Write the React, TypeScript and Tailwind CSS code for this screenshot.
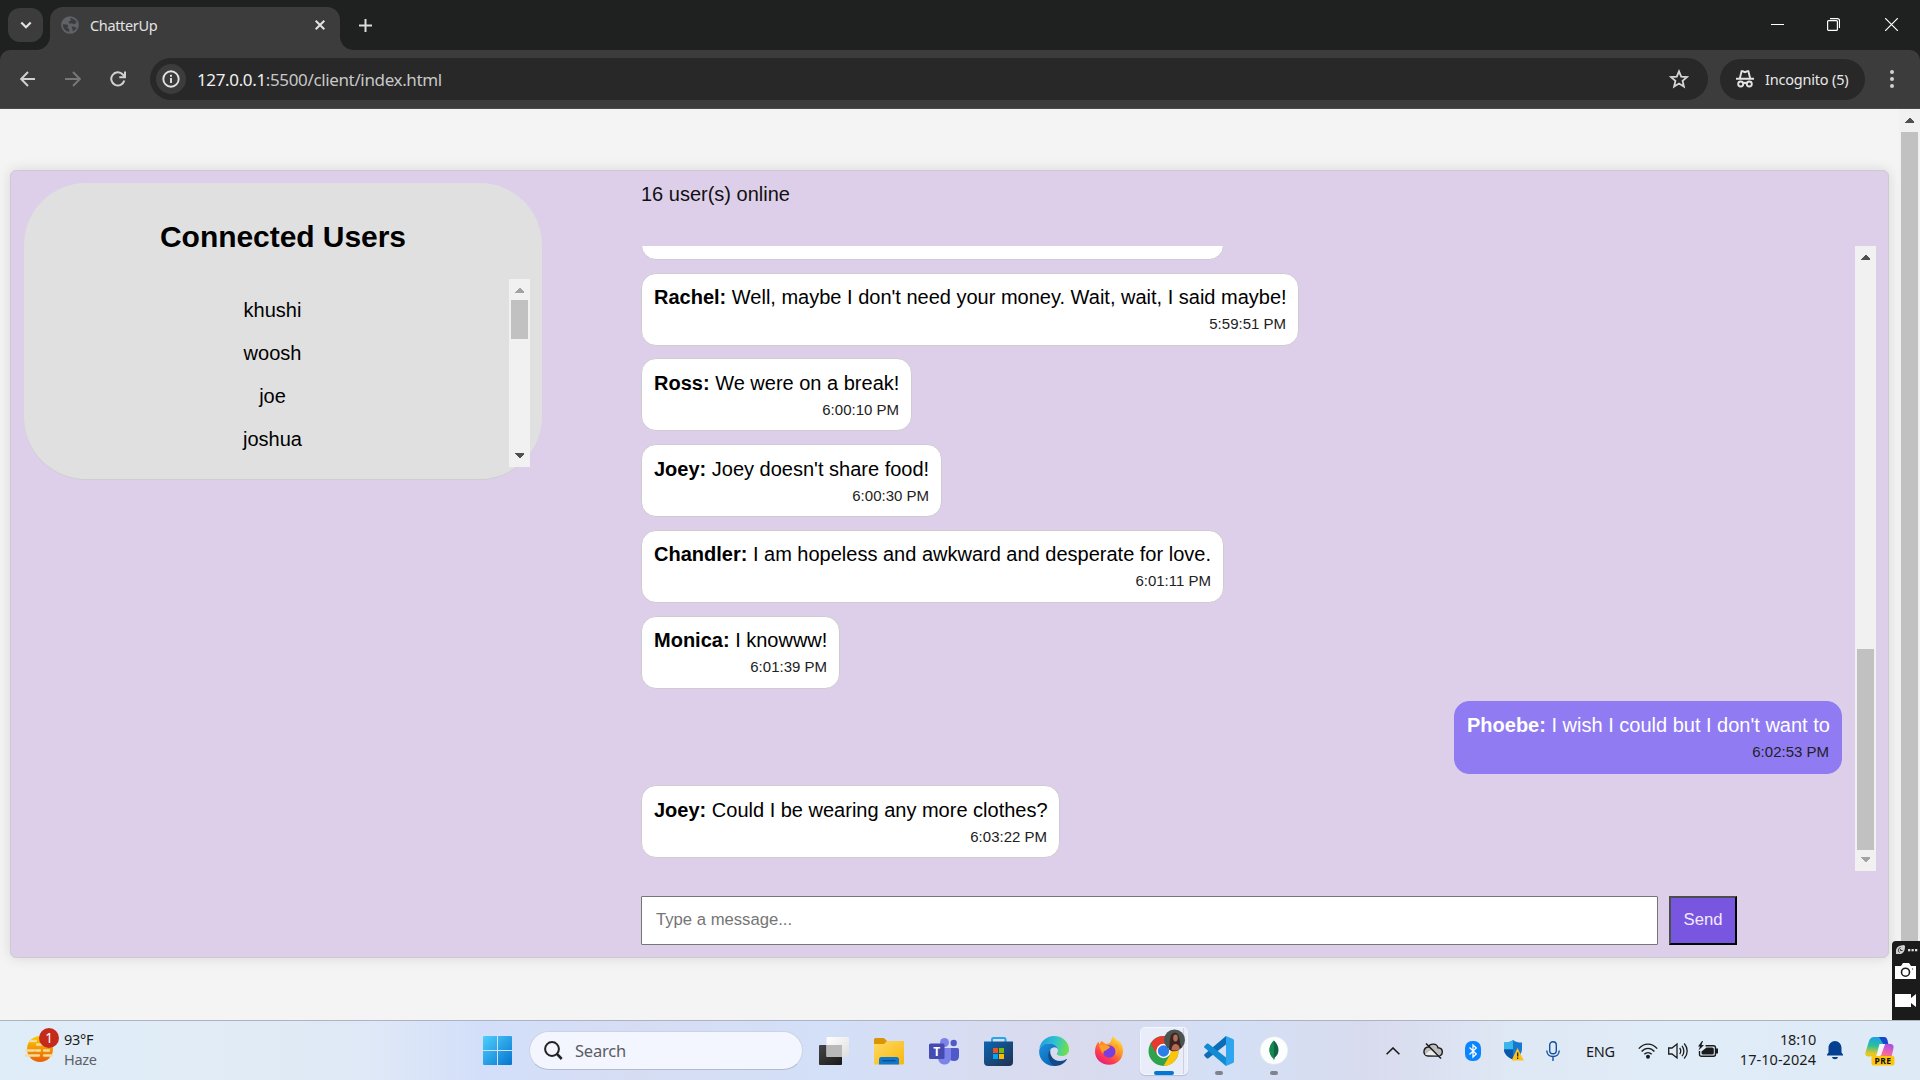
import React from "react";

type Message = {
  name: string;
  text: string;
  time: string;
  width: string;
  gap: string;
  pad: string;
  own?: boolean;
};

const messages: Message[] = [
  { name: "Rachel:", text: "Well, maybe I don't need your money. Wait, wait, I said maybe!", time: "5:59:51 PM", width: "w-[658px]", gap: "mt-[13px]", pad: "pt-[11px]" },
  { name: "Ross:", text: "We were on a break!", time: "6:00:10 PM", width: "w-[271px]", gap: "mt-[12px]", pad: "pt-[12px]" },
  { name: "Joey:", text: "Joey doesn't share food!", time: "6:00:30 PM", width: "w-[301px]", gap: "mt-[13px]", pad: "pt-[12px]" },
  { name: "Chandler:", text: "I am hopeless and awkward and desperate for love.", time: "6:01:11 PM", width: "w-[583px]", gap: "mt-[13px]", pad: "pt-[11px]" },
  { name: "Monica:", text: "I knowww!", time: "6:01:39 PM", width: "w-[199px]", gap: "mt-[13px]", pad: "pt-[11px]" },
  { name: "Phoebe:", text: "I wish I could but I don't want to", time: "6:02:53 PM", width: "w-[388px]", gap: "mt-[12px]", pad: "pt-[11px]", own: true },
  { name: "Joey:", text: "Could I be wearing any more clothes?", time: "6:03:22 PM", width: "w-[419px]", gap: "mt-[11px]", pad: "pt-[12px]" },
];

const users = ["khushi", "woosh", "joe", "joshua"];

function Arrow({ up, dim }: { up?: boolean; dim?: boolean }) {
  return (
    <svg width="9" height="5" viewBox="0 0 9 5" className="block shrink-0" shapeRendering="crispEdges">
      <path d={up ? "M0 5h9v-1L5 0H4L0 4z" : "M0 0h9v1L5 5H4L0 1z"} fill={dim ? "#a3a3a3" : "#505050"} />
    </svg>
  );
}

function BrowserTabs() {
  return (
    <div className="flex h-[50px] shrink-0 bg-[#1f2120] text-[#e3e3e3]">
      <button className="mt-2 ml-2 flex h-[34px] w-[35px] items-center justify-center rounded-xl bg-[#3c3c3c]">
        <svg width="12" height="8" viewBox="0 0 12 8" fill="none" stroke="#e3e3e3" strokeWidth="2.2">
          <path d="M1.3 1.5 6 6.2l4.7-4.7" />
        </svg>
      </button>
      <div className="-mr-[14px] flex h-[50px] items-end">
        <svg width="14" height="14" viewBox="0 0 14 14" className="-ml-[7px] block">
          <path d="M14 0v14H0C8 14 14 8 14 0z" fill="#3c3c3c" />
        </svg>
        <div className="flex h-[43px] w-[290px] items-center rounded-t-[13px] bg-[#3c3c3c] pb-[7px]">
          <svg width="18" height="18" viewBox="0 0 18 18" className="ml-[11px]">
            <circle cx="9" cy="9" r="8.8" fill="#5f6368" />
            <path d="M1.800 8.200c2 .2 4.800 0 5.300 1.300.5 1.200-1 1.500-.4 2.500.5.800 1.700.4 1.600 1.600v2.200C4.700 15.500 1.800 12.500 1.800 8.200zM9.300 1.900c3.200.3 5.500 2 6.500 4.700-1.200.300-1.600 1.600-2.800 1.700-1 .1-1.200-1.100-2.300-1.100-1 0-1.300.6-2.300.2-1-.5-.9-1.600-.1-2.200.7-.5 1.500-.2 1.700-1 .2-.9-1-1.100-.7-2.300zM11 10.200c1.500 0 2 1 3.300 1.100.6.100 1 0 1.300.2-.7 1.600-2 3-3.800 3.700-.6-.7.2-1.300-.2-2.200-.4-.8-1.500-1.800-.6-2.800z" fill="#3c3c3c" />
          </svg>
          <span className="ml-[11px] w-[225px] text-[14.500px] leading-5 tracking-[-0.35px]">ChatterUp</span>
          <svg width="10" height="10" viewBox="0 0 10 10" className="mr-[15px] shrink-0" stroke="#e3e3e3" strokeWidth="2">
            <path d="m.7.7 8.600 8.600M9.300.7.7 9.300" />
          </svg>
        </div>
        <svg width="14" height="14" viewBox="0 0 14 14" className="block">
          <path d="M0 0v14h14C6 14 0 8 0 0z" fill="#3c3c3c" />
        </svg>
      </div>
      <svg width="13" height="13" viewBox="0 0 13 13" className="mt-[19px] ml-[19px]" stroke="#dcdcdc" strokeWidth="2">
        <path d="M6.500 0v13M0 6.500h13" />
      </svg>
      <div className="mt-[18px] ml-auto flex h-[13px]">
        <svg width="13" height="13" viewBox="0 0 13 13" stroke="#fff" strokeWidth="1">
          <path d="M0 6.500h13" />
        </svg>
        <svg width="13" height="13" viewBox="0 0 13 13" className="ml-[43px]" fill="none" stroke="#fff" strokeWidth="1.200">
          <rect x=".6" y="2.600" width="9.800" height="9.800" rx="1" />
          <path d="M3 .6h7.500a2 2 0 0 1 2 2V10" />
        </svg>
        <svg width="13" height="13" viewBox="0 0 13 13" className="ml-[45px] mr-[22px]" stroke="#fff" strokeWidth="1.200">
          <path d="m0 0 13 13M13 0 0 13" />
        </svg>
      </div>
    </div>
  );
}

function Toolbar() {
  return (
    <div className="h-[59px] shrink-0 bg-[#1f2120]">
      <div className="flex h-[59px] items-center rounded-t-[10px] border-b border-[#4a4849] bg-[#3c3c3c]">
        <svg width="16" height="16" viewBox="0 0 16 16" className="ml-5" fill="none" stroke="#d0d0d0" strokeWidth="2">
          <path d="M15 8H1.500M8 1 1.200 8 8 15" />
        </svg>
        <svg width="16" height="16" viewBox="0 0 16 16" className="ml-[29px]" fill="none" stroke="#777" strokeWidth="2">
          <path d="M0 8h14.500M8 1l6.800 7L8 15" />
        </svg>
        <svg width="16" height="16" viewBox="0 0 16 16" className="ml-[29px]" fill="none" stroke="#d0d0d0" strokeWidth="2">
          <path d="M14.300 9.500A6.600 6.600 0 1 1 12.800 3.500L14.500 5.300M15 .5v5.700H9.300" />
        </svg>
        <div className="ml-6 flex h-[42px] w-[1558px] items-center rounded-full bg-[#282828]">
          <div className="ml-[6px] flex h-[30px] w-[30px] items-center justify-center rounded-full bg-[#3c3c3c]">
            <svg width="18" height="18" viewBox="0 0 18 18" fill="none" stroke="#e3e3e3" strokeWidth="1.900">
              <circle cx="9" cy="9" r="7.700" />
              <path d="M9 8v5M9 4.800v1.900" />
            </svg>
          </div>
          <span className="ml-[11px] pt-px text-[17px] leading-6 tracking-[-0.360px] whitespace-nowrap text-[#c7c7c7]">
            <span className="text-[#f0f0f0]">127.0.0.1</span>:5500/client/index.html
          </span>
          <svg width="20" height="20" viewBox="0 0 20 20" className="mr-[19px] ml-auto" fill="none" stroke="#d4d4d4" strokeWidth="1.800">
            <path d="m10 2.300 2.200 5.300 5.800.5-4.400 3.800 1.300 5.600L10 14.500l-4.900 3 1.300-5.600L2 8.100l5.800-.5z" />
          </svg>
        </div>
        <div className="ml-3 flex h-[41px] w-[145px] items-center rounded-full bg-[#282828]">
          <svg width="18" height="18" viewBox="0 0 18 18" className="ml-4" fill="none" stroke="#e3e3e3" strokeWidth="1.900">
            <path d="M0 8.700h18M3.800 8.500 5.600 1.300h1.200l2.200.9 2.200-.9h1.200l1.800 7.200M7.500 13.500c.8-.7 2.200-.7 3 0" />
            <circle cx="4.700" cy="14" r="2.500" />
            <circle cx="13.300" cy="14" r="2.500" />
          </svg>
          <span className="ml-[11px] pb-px text-[14.500px] leading-5 tracking-[-0.200px] whitespace-nowrap text-[#e8e8e8]">Incognito (5)</span>
        </div>
        <svg width="4" height="18" viewBox="0 0 4 18" className="ml-[25px]" fill="#d0d0d0">
          <circle cx="2" cy="2" r="2" />
          <circle cx="2" cy="9" r="2" />
          <circle cx="2" cy="16" r="2" />
        </svg>
      </div>
    </div>
  );
}

function Bubble({ m }: { m: Message }) {
  return (
    <div
      className={`${m.width} ${m.gap} ${m.pad} h-[73px] shrink-0 rounded-[15px] border px-3 whitespace-nowrap ${
        m.own ? "self-end border-[#907bf3] bg-[#907bf3] text-white" : "border-[#cfcbd1] bg-white text-black"
      }`}
    >
      <p className="text-[20px] leading-6">
        <b>{m.name}</b> {m.text}
      </p>
      <p className="mt-[6px] text-right text-[15px] leading-[18px] text-[#222]">{m.time}</p>
    </div>
  );
}

function Sidebar() {
  return (
    <aside className="mt-3 ml-[13px] flex h-[296px] w-[518px] shrink-0 flex-col rounded-[62px] bg-[#e0e0e0] shadow-[0_1px_0_#d0cdd3]">
      <h2 className="mt-[36px] text-center text-[30px] leading-9 font-bold tracking-[-0.050px] text-black">Connected Users</h2>
      <div className="mt-[24px] mr-3 ml-[6px] flex h-[188px] shrink-0">
        <ul className="flex-1 pt-[10px] pl-[6px] text-center text-[20px] leading-[43px] text-black">
          {users.map((u) => (
            <li key={u}>{u}</li>
          ))}
        </ul>
        <div className="flex w-[21px] flex-col items-center bg-[#f1f1f1]">
          <div className="flex h-[21px] items-center pt-[2px]">
            <Arrow up dim />
          </div>
          <div className="h-[39px] w-[17px] bg-[#c1c1c1]" />
          <div className="mt-auto mb-[9px]">
            <Arrow />
          </div>
        </div>
      </div>
    </aside>
  );
}

function Chat() {
  return (
    <main className="ml-[99px] flex w-[1236px] flex-col">
      <p className="mt-[11px] text-[20px] leading-6 text-[#111]">16 user(s) online</p>
      <div className="mt-[40px] flex h-[625px]">
        <div className="flex w-[1201px] flex-col overflow-hidden">
          <div className="-mt-[59px] h-[73px] w-[583px] shrink-0 rounded-[15px] border border-[#cfcbd1] bg-white" />
          {messages.map((m) => (
            <Bubble key={m.time} m={m} />
          ))}
        </div>
        <div className="ml-[13px] flex w-[21px] shrink-0 flex-col items-center bg-[#f1f1f1]">
          <div className="mt-[9px]">
            <Arrow up />
          </div>
          <div className="mt-[389px] h-[201px] w-[17px] bg-[#c1c1c1]" />
          <div className="mt-[7px]">
            <Arrow dim />
          </div>
        </div>
      </div>
      <div className="mt-[25px] flex h-[49px]">
        <input
          className="w-[1017px] rounded-[1px] border border-[#767676] bg-white px-[14px] text-[16.670px] placeholder:text-[#757575]"
          placeholder="Type a message..."
        />
        <button className="ml-[11px] w-[68px] border-2 border-t-[#4d4d4d] border-r-black border-b-black border-l-[#4d4d4d] bg-[#7856e0] pb-[2px] text-[16.670px] text-[#f3eafd]">
          Send
        </button>
      </div>
    </main>
  );
}

function Recorder() {
  return (
    <div className="absolute right-0 bottom-0 flex h-[79px] w-7 flex-col items-center rounded-tl-[4px] bg-[#1b1b1b]">
      <svg width="28" height="79" viewBox="0 0 28 79">
        <path d="M4 13V9c1-4 4-4.500 8-5l1 1c-.2 4-.5 6-4 8z" fill="#d0d0d0" />
        <path d="M7.500 11.500C5.500 10 6.500 7 8.500 6.500M8.500 8v1.500h2" fill="none" stroke="#333" />
        <g fill="#ddd">
          <rect x="16" y="8" width="2.300" height="2.300" />
          <rect x="19.500" y="8" width="2.300" height="2.300" />
          <rect x="23" y="8" width="2.300" height="2.300" />
        </g>
        <path d="M3 25h6l2-3h6l2 3h5v13H3z" fill="#fff" />
        <circle cx="13.500" cy="31.200" r="4" fill="none" stroke="#1b1b1b" strokeWidth="1.600" />
        <circle cx="20.500" cy="28" r=".7" fill="#555" />
        <path d="M3 53h16v4l5-4v13l-5-4v4H3z" fill="#fff" />
      </svg>
    </div>
  );
}

function Page() {
  return (
    <div className="relative flex h-[911px] shrink-0 bg-[#f4f4f4] font-['Liberation_Sans',Arial,sans-serif]">
      <div className="mt-[61px] ml-[10px] flex h-[788px] w-[1879px] shrink-0 rounded-[6px] border border-[#ccc] bg-[#ddcfe9] shadow-[0_0_13px_rgba(0,0,0,0.12)]">
        <Sidebar />
        <Chat />
      </div>
      <div className="ml-[10px] flex w-[21px] flex-col items-center bg-[#f1f1f1]">
        <div className="mt-[9px] mr-px">
          <Arrow up />
        </div>
        <div className="mt-[9px] h-[860px] w-[17px] bg-[#c1c1c1]" />
      </div>
      <Recorder />
    </div>
  );
}

function WeatherIcon() {
  return (
    <svg width="36" height="36" viewBox="0 0 36 36" className="mt-[6px] ml-[24px] shrink-0">
      <defs>
        <linearGradient id="sun" x1="0" y1="0" x2="0" y2="1">
          <stop offset="0" stopColor="#fccb00" />
          <stop offset="1" stopColor="#ea5f07" />
        </linearGradient>
      </defs>
      <circle cx="16" cy="22" r="13" fill="url(#sun)" />
      <g stroke="#f3dc9c" strokeWidth="2.300" strokeLinecap="round">
        <path d="M6 14h6M13 17.500h5M2 23.500h8M12 23.500h4M20 23.500h5M2 28.500h13M20 28.500h8" />
      </g>
      <circle cx="25" cy="11" r="10" fill="#c42b1c" />
      <text x="25" y="16" textAnchor="middle" fontSize="13.500" fill="#fff">1</text>
    </svg>
  );
}

function AppIcons() {
  return (
    <>
      <svg width="30" height="30" viewBox="0 0 30 30" className="ml-[16px] shrink-0">
        <defs>
          <linearGradient id="tvb" x1="0" y1="0" x2="1" y2="1"><stop stopColor="#454545" /><stop offset="1" stopColor="#1a1a1a" /></linearGradient>
          <linearGradient id="tvw" x1="0" y1="0" x2="1" y2="1"><stop stopColor="#fff" /><stop offset="1" stopColor="#dedede" /></linearGradient>
        </defs>
        <rect x="0" y="9" width="23" height="20" rx="1" fill="url(#tvb)" />
        <rect x="7.500" y="1" width="22.500" height="20" rx="1" fill="url(#tvw)" />
        <path d="M7.500 9H23v12H7.500z" fill="#b9b9b9" />
      </svg>
      <svg width="30" height="30" viewBox="0 0 30 30" className="ml-[25px] shrink-0">
        <defs>
          <linearGradient id="fold" x1="0" y1="0" x2="1" y2="1"><stop stopColor="#ffda62" /><stop offset="1" stopColor="#f8b60e" /></linearGradient>
        </defs>
        <path d="M0 3.500Q0 2 1.500 2H9q1 0 2 1l2 2h15q2 0 2 2v3H0z" fill="#d99504" />
        <path d="M0 8h10l3-3h15q2 0 2 2v20.500q0 1-1.500 1h-27Q0 28.500 0 27z" fill="url(#fold)" />
        <path d="M5 28.500v-5q0-2.500 2.500-2.500h15q2.500 0 2.500 2.500v5z" fill="#1177cb" />
        <path d="M8.500 24.700h13" stroke="#0c4b8e" strokeWidth="1.300" />
      </svg>
      <svg width="30" height="30" viewBox="0 0 30 30" className="ml-[25px] shrink-0">
        <circle cx="15.500" cy="6.500" r="4.500" fill="#7b83eb" />
        <circle cx="24.700" cy="7" r="3.200" fill="#5059c9" />
        <path d="M20 12h8.500q1.500 0 1.500 1.500V20q0 5-5 5t-5-4z" fill="#5059c9" />
        <path d="M9 12h13v9c0 5-3 7.500-6.500 7.500S9 26 9 21z" fill="#7b83eb" />
        <rect x="0" y="7.500" width="15.500" height="15.500" rx="1.500" fill="#454bb0" />
        <text x="7.700" y="19.700" textAnchor="middle" fontSize="12" fontWeight="700" fill="#fff">T</text>
      </svg>
      <svg width="30" height="30" viewBox="0 0 30 30" className="ml-[25px] shrink-0">
        <defs>
          <linearGradient id="store" x1="0" y1="0" x2="1" y2="1"><stop stopColor="#0b66b3" /><stop offset="1" stopColor="#22304f" /></linearGradient>
        </defs>
        <path d="M8 6.500V3.500Q8 2 9.500 2h10.500q1.500 0 1.500 1.500v3" fill="none" stroke="#20a8e8" strokeWidth="2" />
        <path d="M0 5.500h29V26q0 4-4 4H4q-4 0-4-4z" fill="url(#store)" />
        <path d="M9 12h5v5H9z" fill="#f25022" />
        <path d="M15 12h5v5h-5z" fill="#7fba00" />
        <path d="M9 18h5v5H9z" fill="#00a4ef" />
        <path d="M15 18h5v5h-5z" fill="#ffb900" />
      </svg>
      <svg width="30" height="30" viewBox="0 0 30 30" className="ml-[25px] shrink-0">
        <defs>
          <linearGradient id="edgeA" x1="0" y1=".2" x2="1" y2=".4"><stop stopColor="#1c9ce0" /><stop offset=".55" stopColor="#2fc4cf" /><stop offset="1" stopColor="#6fe04b" /></linearGradient>
          <linearGradient id="edgeB" x1="0" y1="0" x2=".8" y2="1"><stop stopColor="#1b93dd" /><stop offset="1" stopColor="#0a5fb5" /></linearGradient>
        </defs>
        <path d="M.3 13C1.300 5.500 7.500 0 15 0c8.500 0 15 6 15 13.500 0 4-3 6.500-7 6.500-3.500 0-5.200-1-5.200-2.200 0-.8 1.200-1.400 1.200-3.800C19 10.500 15 7.500 10.500 7.500 5.500 7.500 1.500 9.800.3 13z" fill="url(#edgeA)" />
        <path d="M.2 14.500C.8 10 5 7.500 10 7.500c5 0 8.500 2.700 9 6-1-1.800-2.800-2.500-4.500-2-4 1-5.500 5-4 9.500 1.500 4.300 5 7 9 7-1.500 1.300-3.500 1.900-5 1.900C6.500 29.900-.5 23 .2 14.500z" fill="url(#edgeB)" />
        <path d="M11.500 13.500c-1.500 5 2.500 11.500 9.500 11.500 2.800 0 4.800-1 6.300-2 .5-.3.800.1.500.6C25.500 27.500 21 30 16.500 30 10 29 7 17.500 11.500 13.500z" fill="#134a86" />
      </svg>
      <svg width="30" height="30" viewBox="0 0 30 30" className="ml-[25px] shrink-0">
        <defs>
          <linearGradient id="fox" x1=".9" y1="0" x2=".25" y2="1"><stop stopColor="#fff14a" /><stop offset=".4" stopColor="#ff9a24" /><stop offset=".75" stopColor="#ff3c4d" /><stop offset="1" stopColor="#e3198a" /></linearGradient>
        </defs>
        <path d="M19 0c1.500 2.500 4 3.700 5.300 6.300.2-.8 0-1.600-.2-2.300C27.500 6.500 29 10.500 29 15c0 8-6 13.800-13.800 13.800C7 28.800 1 23 1 15.500 1 11 2.500 8 4.500 5.500l.8 3C6.500 7 7 6 6.800 5c2 .5 3.500 1.500 4.700 3 2-.2 3.500-.3 4.500-1.500C17.500 5 17.500 2 19 0z" fill="url(#fox)" />
        <circle cx="15.200" cy="15.500" r="6.200" fill="#7a3de0" />
        <path d="M5 9c3-1.500 5-.5 6.500 0 2 .7 4 .5 4.500 2-1 2-3.500 2-3.800 3.500-2-.2-3.200 1.300-2.700 3.500C7 16 6 12 5 9z" fill="#ff9d28" />
        <path d="M18.500 10c3.500 1.500 4.500 5 3.500 8 3-2 3.500-6.500 1-9.500z" fill="#ffa02a" />
      </svg>
      <div className="ml-[16px] flex h-12 w-12 shrink-0 rounded-[5px] border border-white/50 bg-[#e9edf9] shadow-[0_1px_1px_rgba(80,90,130,0.25)]">
        <svg width="46" height="48" viewBox="0 0 46 48" className="overflow-visible">
          <path d="M42.500 0v46" stroke="#cbd0e2" />
          <circle cx="22.500" cy="23" r="15" fill="#2fa24c" />
          <path d="M9.500 15.500a15 15 0 0 1 26 0H22.500l-6.500 11z" fill="#e33b2e" />
          <path d="M35.500 15.500a15 15 0 0 1-13 22.500L29 26.700 29.500 19l-3-3.500z" fill="#fdc40c" />
          <circle cx="22.500" cy="23" r="7.200" fill="#fff" />
          <circle cx="22.500" cy="23" r="5.700" fill="#2b7de9" />
          <circle cx="33.500" cy="12" r="10.500" fill="#4a5450" />
          <path d="M28 21.500c1-6 .5-11 2-14.500q4-5 7.500 0c1.500 4 1.500 9 3 12.500-3 4-9 5-12.500 2z" fill="#42221e" />
          <path d="M30.500 22c0-3 1.500-6 4-6s4 2.500 4.300 5c-2.500 1.700-6 2-8.300 1z" fill="#b36d5b" />
          <ellipse cx="34.500" cy="10" rx="2.300" ry="3.400" fill="#a8705d" />
          <rect x="13" y="43" width="20" height="4" rx="2" fill="#0078d4" />
        </svg>
      </div>
      <div className="ml-[16px] flex h-12 w-[30px] shrink-0 flex-col items-center pt-[9px]">
        <svg width="30" height="30" viewBox="0 0 30 30">
          <path d="M22 0v8.500L4.500 22.200q-1 .6-1.800 0L.5 20q-.8-1 0-1.800z" fill="#0a6db5" />
          <path d="M22 30v-8.500L4.500 7.800q-1-.6-1.800 0L.5 10q-.8 1 0 1.800z" fill="#128bd2" />
          <path d="M22 0 29 3q1 .6 1 1.500v21q0 .9-1 1.500L22 30z" fill="#2ea5ef" />
        </svg>
        <div className="mt-[5px] h-1 w-2 rounded-full bg-[#80828e]" />
      </div>
      <div className="ml-[25px] flex h-12 w-[30px] shrink-0 flex-col items-center pt-[9px]">
        <svg width="30" height="30" viewBox="0 0 30 30">
          <circle cx="15" cy="14.500" r="14" fill="#fcfdfd" stroke="#d8dde8" strokeWidth=".5" />
          <path d="M15 4.500c3.500 3.500 4.500 6.500 4.500 9.500 0 4-2 6-3.700 7.500L15 24.500l-.8-3C12.500 20 10.500 18 10.500 14c0-3 1-6 4.500-9.500z" fill="#116149" />
          <path d="M15 4.500V23c-3-2-4.500-5-4.500-9 0-3 1-6 4.500-9.500z" fill="#13894f" />
        </svg>
        <div className="mt-[5px] h-1 w-2 rounded-full bg-[#80828e]" />
      </div>
    </>
  );
}

function Tray() {
  return (
    <div className="mr-[25px] ml-auto flex items-center text-[#1b1b1b]">
      <svg width="14" height="8" viewBox="0 0 14 8" fill="none" stroke="#1b1b1b" strokeWidth="1.600">
        <path d="m.6 7.300 6.400-6.300 6.400 6.300" />
      </svg>
      <svg width="20" height="18" viewBox="0 0 20 18" className="ml-[23px]">
        <path d="M5.500 5C7 1 14 1 15 5.800c6 .5 5.500 8.200 0 8.200H5C-.5 14-.5 5.500 5.500 5z" fill="#bdbdbd" stroke="#1b1b1b" strokeWidth="1.400" />
        <path d="M2 13c3-4 6-5.500 9-4.500l6 5z" fill="#ececec" />
        <path d="m3 1.500 15 15" stroke="#1b1b1b" strokeWidth="1.600" />
      </svg>
      <svg width="16" height="20" viewBox="0 0 16 20" className="ml-[22px]">
        <rect width="16" height="20" rx="7" fill="#0a84ff" />
        <path d="M4.500 6.500 11.300 13 8 16V4l3.300 3-6.800 6.500" fill="none" stroke="#fff" strokeWidth="1.300" />
      </svg>
      <svg width="20" height="21" viewBox="0 0 20 21" className="ml-[23px]">
        <path d="M9 0c2.500 2 5 2.500 9 2.500V9c0 5-4 8.500-9 10.500C4 17.500 0 14 0 9V2.500C4 2.500 6.500 2 9 0z" fill="#1679cf" />
        <path d="M9 0v9.500H0v-7C4 2.500 6.500 2 9 0z" fill="#37b7ea" />
        <path d="M9 9.500H0C.3 14 4 17.500 9 19.500z" fill="#0a56a8" />
        <path d="m13.500 8 6.300 12.500H7.500z" fill="#fdc21a" />
        <path d="M13.700 12.500v4M13.700 17.500v1.600" stroke="#222" strokeWidth="1.300" />
      </svg>
      <svg width="14" height="20" viewBox="0 0 14 20" className="ml-[22px]" fill="none" stroke="#1450a0" strokeWidth="1.400">
        <rect x="3.700" y=".8" width="6.600" height="12" rx="3.300" />
        <path d="M.8 9.500c0 3.800 2.700 6 6.200 6s6.200-2.200 6.200-6M7 15.500V20" />
      </svg>
      <span className="ml-[26px] w-[29px] text-[14.500px] leading-5 tracking-[-0.300px]">ENG</span>
      <svg width="20" height="16" viewBox="0 0 20 16" className="ml-[23px]" fill="none" stroke="#1b1b1b" strokeWidth="1.400">
        <path d="M.8 5.600C6-.4 14-.4 19.200 5.600M3.600 8.500c3.700-4.200 9.100-4.200 12.800 0M6.300 11.300c2.200-2.300 5.200-2.300 7.400 0" />
        <circle cx="10" cy="13.800" r="1.300" fill="#1b1b1b" />
      </svg>
      <svg width="20" height="18" viewBox="0 0 20 18" className="ml-[10px]" fill="none" stroke="#1b1b1b" strokeWidth="1.300">
        <path d="M.7 6v6H4l5 4V2L4 6zM11.700 6c1.300 1.800 1.300 4.200 0 6M14 3.800c2.500 3 2.500 7.400 0 10.400M16.200 1.500c4 4.500 4 10.500 0 15" />
      </svg>
      <svg width="20" height="17" viewBox="0 0 20 17" className="mb-[2px] ml-[10px]">
        <path d="M7.500 4.700h8q2 0 2 2v6.600q0 2-2 2h-12q-2 0-2-2V10" fill="none" stroke="#1b1b1b" strokeWidth="1.400" />
        <path d="M8.500 6.500H14q1.800 0 1.800 1.500v4q0 1.500-1.500 1.500H5q-1.500 0-1.500-1.500v-1.500z" fill="#1b1b1b" />
        <path d="M4 0 0 5.500h2L.5 9.500 6 4H3.500L5 0zM18 7.500h2v5h-2z" fill="#1b1b1b" />
      </svg>
      <div className="ml-[17px] w-[81px] pb-[3px] text-right text-[14.500px] leading-[20px]">
        <p className="tracking-[-0.200px]">18:10</p>
        <p className="-ml-2 tracking-[0.050px] whitespace-nowrap">17-10-2024</p>
      </div>
      <svg width="16" height="19" viewBox="0 0 16 19" className="ml-[11px]" fill="#043f90">
        <path d="M0 14.500v-1l1.500-2V7C1.500 3 4.500 0 8 0s6.500 3 6.500 7v4.500l1.500 2v1zM5 16h6c-.5 3-5.500 3-6 0z" />
      </svg>
      <svg width="30" height="30" viewBox="0 0 30 30" className="ml-[22px]">
        <defs>
          <linearGradient id="copA" x1=".4" y1="0" x2=".3" y2="1"><stop stopColor="#1ca1ea" /><stop offset=".45" stopColor="#2bbf9c" /><stop offset=".85" stopColor="#e5c922" /></linearGradient>
          <linearGradient id="copB" x1=".8" y1="0" x2=".3" y2="1"><stop stopColor="#a650e8" /><stop offset=".5" stopColor="#e760b4" /><stop offset="1" stopColor="#ff8552" /></linearGradient>
        </defs>
        <path d="M9 1h10q2.500 0 3.300 3l1 4h-5L14 18q-.8 2.500-3.500 2.500H3.500Q0 20.500 .3 17L4 5Q5.500 1 9 1z" fill="url(#copA)" />
        <path d="M14 1h5q2.500 0 3.300 3l1 4h-5z" fill="#1a45ce" />
        <path d="M20 8h6q3 .5 2.500 4l-2 9H7l6.500-1.500z" fill="url(#copB)" />
        <path d="M14.500 8H20l-4 11.500-5 1.500z" fill="#f5f3fb" />
        <rect x="6.500" y="20" width="23" height="9.500" rx="2" fill="#fdc60c" />
        <text x="18" y="27.700" textAnchor="middle" fontSize="8.500" fontWeight="700" letterSpacing=".5" fill="#111">PRE</text>
      </svg>
    </div>
  );
}

function Taskbar() {
  return (
    <div className="flex h-[60px] shrink-0 items-center border-t border-[#adb3c3] bg-[linear-gradient(90deg,#dfedf8_0%,#e1ebf5_14%,#dfe9f7_19%,#d3dffa_25%,#d6ddf3_33%,#d3e0f8_43%,#d7ddf3_49%,#d9daed_56%,#d4e0f6_64%,#d8dbee_71%,#dfe8f5_79%,#e0edf8_88%,#deebf6_100%)]">
      <div className="flex h-full w-[483px] shrink-0">
        <WeatherIcon />
        <div className="mt-[8px] ml-1 text-[14.500px] leading-[20px] tracking-[-0.300px]">
          <p className="text-[#1b1b1b]">93°F</p>
          <p className="text-[#5c6067]">Haze</p>
        </div>
      </div>
      <svg width="29" height="29" viewBox="0 0 29 29" className="shrink-0">
        <defs>
          <linearGradient id="win" gradientUnits="userSpaceOnUse" x1="0" y1="0" x2="29" y2="29"><stop stopColor="#4fd0fc" /><stop offset="1" stopColor="#0574d0" /></linearGradient>
        </defs>
        <path d="M1 0h13v14H0V1q0-1 1-1zM15 0h13q1 0 1 1v13H15zM0 15h14v14H1q-1 0-1-1zM15 15h14v13q0 1-1 1H15z" fill="url(#win)" />
      </svg>
      <div className="ml-[17px] flex h-[39px] w-[274px] shrink-0 items-center rounded-full border border-[#ccd3e6] border-b-[#b3bccf] bg-[#f3f6fe]">
        <svg width="19" height="19" viewBox="0 0 19 19" className="ml-[14px]" fill="none" stroke="#222" strokeWidth="2">
          <circle cx="8" cy="8" r="6.900" />
          <path d="m12.700 12.700 5 5.300" strokeWidth="2.600" />
        </svg>
        <span className="ml-3 text-[16.500px] leading-6 tracking-[-0.200px] text-[#5a5c62]">Search</span>
      </div>
      <AppIcons />
      <Tray />
    </div>
  );
}

export default function App() {
  return (
    <div className="flex h-[1080px] w-[1920px] flex-col overflow-hidden bg-[#f4f4f4] font-['Noto_Sans','Open_Sans',sans-serif]">
      <BrowserTabs />
      <Toolbar />
      <Page />
      <Taskbar />
    </div>
  );
}
